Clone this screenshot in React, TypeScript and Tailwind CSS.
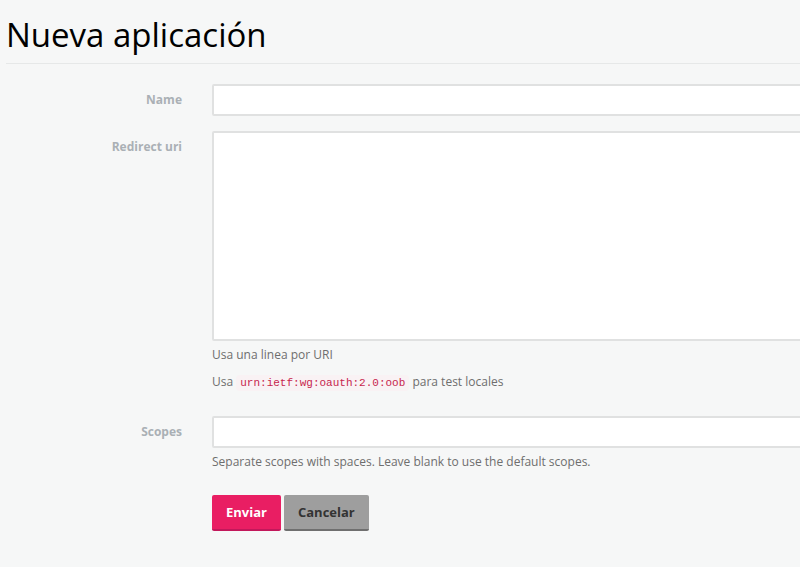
import React from "react";

export default function App() {
  const font = { fontFamily: '"Open Sans", "Noto Sans", sans-serif' };
  return (
    <div className="w-full min-h-[567px] overflow-hidden bg-[#f6f7f7]" style={font}>
      <div className="w-[840px] px-[6px]">
        <h1 className="pt-[15px] pb-[8px] text-[33px] leading-[40px] font-normal text-black border-b border-[#e6e8e8]">
          Nueva aplicación
        </h1>
        <form className="pt-[20px]">
          <div className="flex mb-[15px]">
            <label className="w-[176px] shrink-0 text-right pt-[7px] text-[12px] leading-[18px] font-bold text-[#aab0b5]">
              Name
            </label>
            <div className="ml-[30px] flex-1">
              <input className="block w-full h-[32px] bg-white border-2 border-[#e0e1e1] rounded-[2px] outline-none" />
            </div>
          </div>
          <div className="flex mb-[24px]">
            <label className="w-[176px] shrink-0 text-right pt-[7px] text-[12px] leading-[18px] font-bold text-[#aab0b5]">
              Redirect uri
            </label>
            <div className="ml-[30px] flex-1">
              <textarea className="block w-full h-[210px] bg-white border-2 border-[#e0e1e1] rounded-[2px] outline-none resize-none" />
              <p className="mt-[5px] text-[12px] leading-[18px] text-[#6e6e6e]">Usa una linea por URI</p>
              <p className="mt-[9px] text-[12px] leading-[18px] text-[#6e6e6e]">
                Usa{" "}
                <code
                  className="px-[4px] py-[2px] rounded-[4px] bg-[#f9f2f4] text-[#c7254e] text-[11px]"
                  style={{ fontFamily: '"Liberation Mono", "DejaVu Sans Mono", monospace' }}
                >
                  urn:ietf:wg:oauth:2.0:oob
                </code>{" "}
                para test locales
              </p>
            </div>
          </div>
          <div className="flex mb-[24px]">
            <label className="w-[176px] shrink-0 text-right pt-[7px] text-[12px] leading-[18px] font-bold text-[#aab0b5]">
              Scopes
            </label>
            <div className="ml-[30px] flex-1">
              <input className="block w-full h-[32px] bg-white border-2 border-[#e0e1e1] rounded-[2px] outline-none" />
              <p className="mt-[5px] text-[12px] leading-[18px] text-[#6e6e6e]">
                Separate scopes with spaces. Leave blank to use the default scopes.
              </p>
            </div>
          </div>
          <div className="flex">
            <div className="w-[176px] shrink-0" />
            <div className="ml-[30px] flex gap-[3px]">
              <button
                type="button"
                className="h-[36px] px-[14px] pt-[2px] rounded-[2px] bg-[#e91e63] border-b-2 border-[#c2185b] text-white text-[13px] font-bold"
              >
                Enviar
              </button>
              <button
                type="button"
                className="h-[36px] px-[14px] pt-[2px] rounded-[2px] bg-[#9e9e9e] border-b-2 border-[#6f6f6f] text-[#333] text-[13px] font-bold"
              >
                Cancelar
              </button>
            </div>
          </div>
        </form>
      </div>
    </div>
  );
}
